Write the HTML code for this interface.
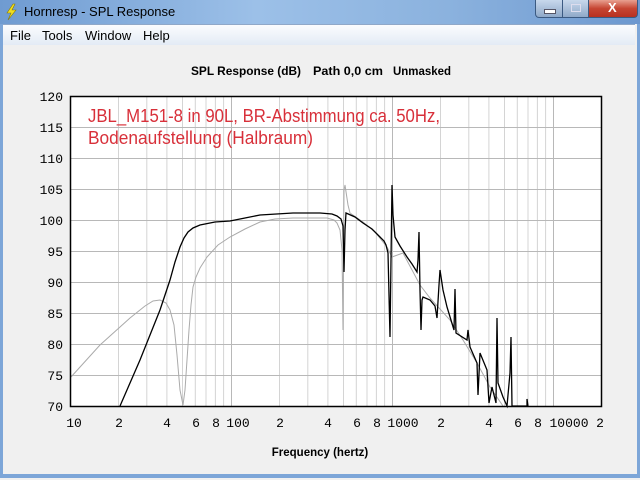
<!DOCTYPE html>
<html><head><meta charset="utf-8"><style>
body{margin:0;width:640px;height:480px;overflow:hidden;background:#f0f0f0;font-family:"Liberation Sans",sans-serif;position:relative}
#tb{position:absolute;left:0;top:0;width:640px;height:24px;background:linear-gradient(90deg,#6f9bd1 0%,#9cc0e8 40%,#8bb2de 70%,#6d98cf 100%)}
#tt{position:absolute;left:24px;top:4px;font-size:13px;color:#000}
#frame{position:absolute;left:0;top:24px;width:634px;height:450px;border-left:3px solid #7da6d8;border-right:3px solid #7da6d8;border-bottom:4px solid #7da6d8;background:#f0f0f0}
#menu{position:absolute;left:3px;top:24px;width:632px;height:20px;background:linear-gradient(#fbfcfe,#e3ebf5);border-top:1px solid #90a8c8}
#menu span{position:absolute;top:3px;font-size:13px}
.btn{position:absolute;top:0;height:17px;border:1px solid #3b5a82;border-top:none}
</style></head><body>
<div id="tb"></div>
<svg style="position:absolute;left:4px;top:3px" width="14" height="18"><path d="M9 1 L3 10 L7 10 L4 17 L12 7 L8 7 L11 1Z" fill="#f2e020" stroke="#8a7a00" stroke-width="0.6"/></svg>
<div id="tt">Hornresp - SPL Response</div>
<div class="btn" style="left:535px;width:26px;background:linear-gradient(#c8d8ec,#8fa9c9);border-radius:0 0 0 4px"><div style="position:absolute;left:8px;top:9px;width:10px;height:3px;background:#fff;border:1px solid #556"></div></div>
<div class="btn" style="left:562px;width:25px;background:linear-gradient(#c8d8ec,#8fa9c9)"><div style="position:absolute;left:8px;top:4px;width:8px;height:6px;border:1px solid #dde"></div></div>
<div class="btn" style="left:588px;width:48px;background:linear-gradient(#e8a090,#c64532 50%,#b83020);border-radius:0 0 4px 0"><div style="position:absolute;left:19px;top:0px;color:#fff;font-weight:bold;font-size:13px">X</div></div>
<div id="frame"></div>
<div id="menu"><span style="left:7px">File</span><span style="left:39px">Tools</span><span style="left:82px">Window</span><span style="left:140px">Help</span></div>
<svg style="position:absolute;left:0;top:0" width="640" height="480">
<g font-size="11.5" font-weight="bold" font-family="Liberation Sans">
<text x="191" y="75" textLength="110" lengthAdjust="spacingAndGlyphs">SPL Response (dB)</text>
<text x="313" y="75" textLength="70" lengthAdjust="spacingAndGlyphs">Path 0,0 cm</text>
<text x="393" y="75" textLength="58" lengthAdjust="spacingAndGlyphs">Unmasked</text>
</g>
<rect x="70.5" y="96.5" width="531" height="310" fill="#fff"/>
<g stroke="#d4d4d4" stroke-width="1">
<path d="M118.5 97V406M146.8 97V406M166.9 97V406M182.5 97V406M195.3 97V406M206 97V406M215.4 97V406M223.6 97V406M279.5 97V406M307.8 97V406M327.9 97V406M343.5 97V406M356.3 97V406M367 97V406M376.4 97V406M384.6 97V406M440.5 97V406M468.8 97V406M488.9 97V406M504.5 97V406M517.3 97V406M528 97V406M537.4 97V406M545.6 97V406"/>
</g>
<g stroke="#b8b8b8"><path d="M231.5 97V406M392.5 97V406M553.5 97V406M71 127.5H601M71 158.5H601M71 189.5H601M71 220.5H601M71 251.5H601M71 282.5H601M71 313.5H601M71 344.5H601M71 375.5H601"/></g>
<text fill="#d8303a" font-family="Liberation Sans" font-size="18"><tspan x="88" y="122" textLength="352" lengthAdjust="spacingAndGlyphs">JBL_M151-8 in 90L, BR-Abstimmung ca. 50Hz,</tspan></text>
<text fill="#d8303a" font-family="Liberation Sans" font-size="18"><tspan x="88" y="144" textLength="225" lengthAdjust="spacingAndGlyphs">Bodenaufstellung (Halbraum)</tspan></text>
<polyline fill="none" stroke="#aaa" stroke-width="1" points="71,377 100,345 130,318 145,306 153,301 160,300 166,303 170,310 174,325 177,355 180,390 183,405 185,390 187,360 189,330 191,305 193,287 196,277 200,268 207,257 218,245 230,237 245,229 260,222 275,219 293,218 327,218 334,220 337,223 340,230 342,250 343,330 344,190 345,185 348,205 350,213 363,222 375,232 387,247 392,257 403,253 420,285 430,298 450,320 463,340 477,363 490,387 503,406"/>
<polyline fill="none" stroke="#000" stroke-width="1.3" points="120,406 140,360 160,310 170,280 175,262 180,247 184,238 188,232 193,228 200,225 215,222 230,221 245,218 260,215 293,213 320,213 332,214 337,216 341,219 343,226 344,272 345,230 346,213 355,217 363,223 372,229 380,237 384,241 386,245 388,253 390,337 391,260 392,185 393,215 395,237 400,246 407,257 412,264 417,272 418,260 419,232 420,290 421,330 422,300 423,297 430,300 435,306 437,318 439,285 440,270 443,290 447,307 454,330 455,289 456,333 467,340 468,330 470,347 477,363 478,395 480,353 487,370 489,403 492,387 496,403 497,318 498,383 503,397 507,406 510,373 511,337 512,406 527,406 527,399 528,406"/>
<rect x="70.5" y="96.5" width="531" height="310" fill="none" stroke="#000" stroke-width="1.5"/>
<g font-family="Liberation Mono" font-size="13" text-anchor="end">
<text x="63" y="101">120</text><text x="63" y="132">115</text><text x="63" y="163">110</text><text x="63" y="194">105</text><text x="63" y="225">100</text><text x="63" y="256">95</text><text x="63" y="287">90</text><text x="63" y="318">85</text><text x="63" y="349">80</text><text x="63" y="380">75</text><text x="63" y="411">70</text>
</g>
<g font-family="Liberation Mono" font-size="13" text-anchor="middle">
<text x="74" y="427">10</text><text x="119" y="427">2</text><text x="167" y="427">4</text><text x="196" y="427">6</text><text x="216" y="427">8</text><text x="238" y="427">100</text><text x="280" y="427">2</text><text x="328" y="427">4</text><text x="357" y="427">6</text><text x="377" y="427">8</text><text x="403" y="427">1000</text><text x="441" y="427">2</text><text x="489" y="427">4</text><text x="518" y="427">6</text><text x="538" y="427">8</text><text x="569" y="427">10000</text><text x="600" y="427">2</text>
</g>
<text x="320" y="456" text-anchor="middle" font-size="11.5" font-weight="bold" font-family="Liberation Sans">Frequency (hertz)</text>
</svg>
</body></html>
